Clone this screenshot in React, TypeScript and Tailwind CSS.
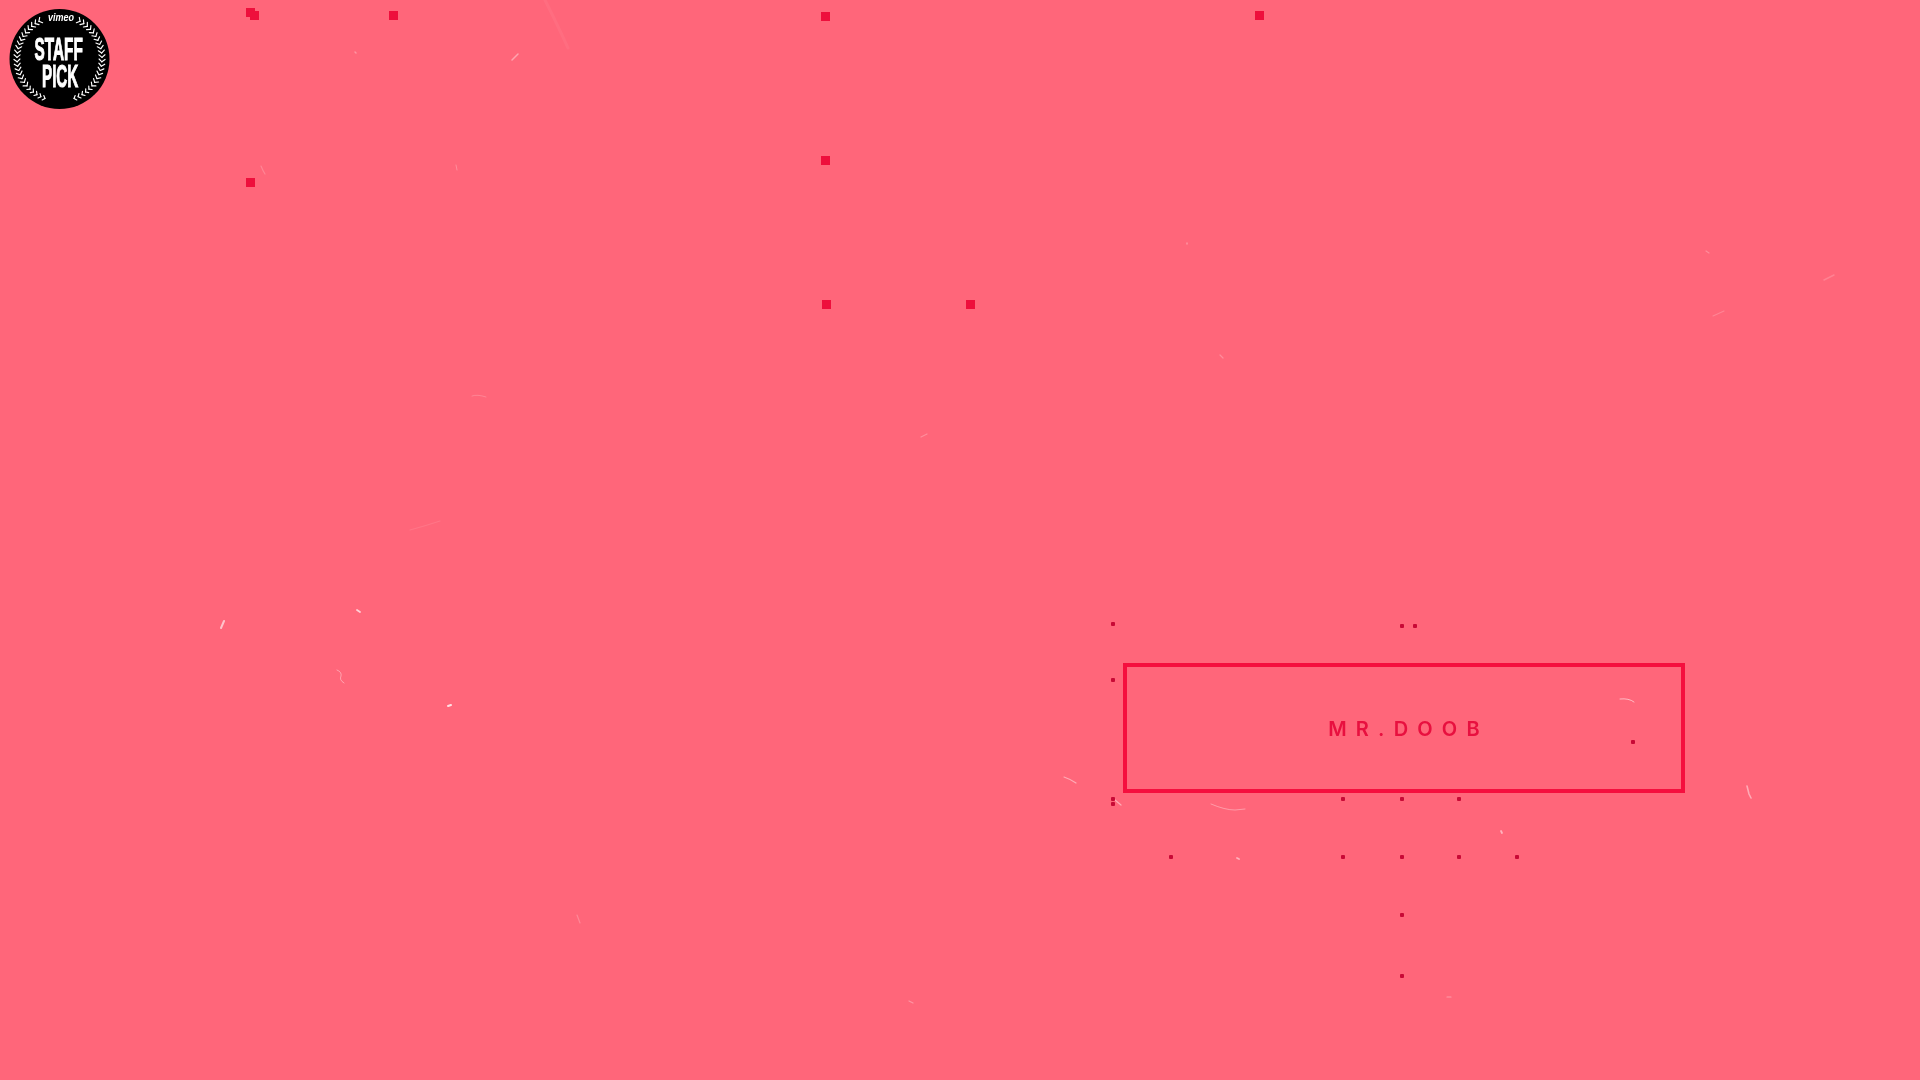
const bigSquares: string[] = [
  "left-[246px] top-[8px]",
  "left-[250px] top-[11px]",
  "left-[389px] top-[11px]",
  "left-[821px] top-[12px]",
  "left-[1255px] top-[11px]",
  "left-[246px] top-[178px]",
  "left-[821px] top-[156px]",
  "left-[822px] top-[300px]",
  "left-[966px] top-[300px]",
];

const dots: string[] = [
  "left-[1111px] top-[622px]",
  "left-[1111px] top-[678px]",
  "left-[1111px] top-[797px]",
  "left-[1111px] top-[802px]",
  "left-[1400px] top-[624px]",
  "left-[1413px] top-[624px]",
  "left-[1341px] top-[797px]",
  "left-[1400px] top-[797px]",
  "left-[1457px] top-[797px]",
  "left-[1169px] top-[855px]",
  "left-[1341px] top-[855px]",
  "left-[1400px] top-[855px]",
  "left-[1457px] top-[855px]",
  "left-[1515px] top-[855px]",
  "left-[1400px] top-[913px]",
  "left-[1400px] top-[974px]",
  "left-[1631px] top-[740px]",
];

const specks: { d: string; o: number; w: number }[] = [
  { d: "M512 60 L518 54", o: 0.4, w: 1.5 },
  { d: "M456 165 L457 170", o: 0.25, w: 1 },
  { d: "M261 166 Q263 171 265 174", o: 0.2, w: 1.2 },
  { d: "M221 628 L224 621", o: 0.6, w: 2 },
  { d: "M357 610 L360 612", o: 0.7, w: 1.8 },
  { d: "M337 670 Q342 672 341 676 Q339 680 344 683", o: 0.4, w: 1 },
  { d: "M448 706 L451 705", o: 0.8, w: 2 },
  { d: "M472 396 Q477 394 486 397", o: 0.2, w: 1 },
  { d: "M921 437 L927 434", o: 0.25, w: 1.2 },
  { d: "M1713 316 L1724 311", o: 0.2, w: 1.2 },
  { d: "M1824 280 L1834 275", o: 0.18, w: 1.5 },
  { d: "M1064 777 Q1070 779 1076 783", o: 0.45, w: 1.2 },
  { d: "M1211 804 Q1225 810 1235 810 L1245 809", o: 0.35, w: 1 },
  { d: "M1115 800 L1121 805", o: 0.45, w: 1.2 },
  { d: "M1747 786 L1749 794 L1751 798", o: 0.45, w: 1.6 },
  { d: "M1620 699 Q1629 698 1634 702", o: 0.55, w: 1 },
  { d: "M577 915 L580 923", o: 0.22, w: 1.2 },
  { d: "M909 1001 L913 1003", o: 0.3, w: 1.2 },
  { d: "M1501 831 L1502 833", o: 0.5, w: 1.8 },
  { d: "M1237 858 L1239 859", o: 0.5, w: 1.8 },
  { d: "M1447 997 L1451 997", o: 0.35, w: 1.2 },
  { d: "M1220 355 L1223 358", o: 0.25, w: 1.2 },
  { d: "M1706 251 L1709 253", o: 0.25, w: 1.2 },
  { d: "M1187 243 L1187 244", o: 0.3, w: 1.5 },
  { d: "M410 530 Q425 526 440 521", o: 0.1, w: 1.2 },
  { d: "M355 52 L356 53", o: 0.3, w: 1.5 },
  { d: "M545 0 Q560 30 568 48", o: 0.05, w: 3 },
];

function Leaves() {
  const cx = 59.5;
  const cy = 58.5;
  const r = 42.5;
  const items = [];
  const n = 23;
  for (let i = 0; i < n; i++) {
    const phi = ((29 + (i * 131) / (n - 1)) * Math.PI) / 180;
    const s = i > n - 6 ? 0.8 : 1;
    for (const side of [-1, 1]) {
      const x = cx + side * r * Math.sin(phi);
      const y = cy - r * Math.cos(phi);
      const tx = side * Math.cos(phi);
      const ty = Math.sin(phi);
      const nx = -ty;
      const ny = tx;
      for (const k of [-1, 1]) {
        const ex = x - tx * 2.6 * s + nx * k * 3 * s;
        const ey = y - ty * 2.6 * s + ny * k * 3 * s;
        items.push(
          <line
            key={`${i}-${side}-${k}`}
            x1={x}
            y1={y}
            x2={ex}
            y2={ey}
            stroke="#ffffff"
            strokeWidth={1.15}
            strokeLinecap="round"
          />,
        );
      }
    }
  }
  return <g>{items}</g>;
}

function Badge() {
  const font = "font-['Liberation_Sans',sans-serif]";
  return (
    <svg className="absolute left-0 top-0 blur-[0.35px]" width="120" height="120" viewBox="0 0 120 120">
      <circle cx="59.5" cy="59" r="50" fill="#000000" />
      <Leaves />
      <text transform="translate(48 21) scale(0.9 1)" fill="#ffffff" fontSize="10" fontWeight="700" fontStyle="italic" className={font}>
        vimeo
      </text>
      <text transform="translate(34.5 59.5) scale(0.495 1)" fill="#ffffff" stroke="#ffffff" strokeWidth="1.1" fontSize="31" fontWeight="700" className={font}>
        STAFF
      </text>
      <text transform="translate(42 86.5) scale(0.49 1)" fill="#ffffff" stroke="#ffffff" strokeWidth="1.1" fontSize="31" fontWeight="700" className={font}>
        PICK
      </text>
    </svg>
  );
}

export default function App() {
  return (
    <div className="relative h-[1080px] w-[1920px] overflow-hidden bg-[#ff667a]">
      <svg className="absolute left-0 top-0 blur-[0.4px]" width="1920" height="1080" viewBox="0 0 1920 1080" fill="none">
        {specks.map((s, i) => (
          <path key={i} d={s.d} stroke="#ffffff" strokeOpacity={s.o} strokeWidth={s.w} strokeLinecap="round" />
        ))}
      </svg>

      <Badge />

      {bigSquares.map((c, i) => (
        <div key={i} className={`absolute h-[9px] w-[9px] bg-[#ee0f3c] blur-[0.4px] ${c}`} />
      ))}

      {dots.map((c, i) => (
        <div key={i} className={`absolute h-[4px] w-[4px] rounded-[1px] bg-[#c80a36] blur-[0.3px] ${c}`} />
      ))}

      <div className="absolute left-[1123px] top-[663px] flex h-[130px] w-[562px] items-center justify-center border-4 border-[#f50f3e] blur-[0.3px]">
        <span className="ml-[9px] mt-[2px] font-['Inter',sans-serif] text-[20px] font-semibold leading-none tracking-[0.46em] text-[#e8103f] blur-[0.3px]">
          MR.DOOB
        </span>
      </div>
    </div>
  );
}
